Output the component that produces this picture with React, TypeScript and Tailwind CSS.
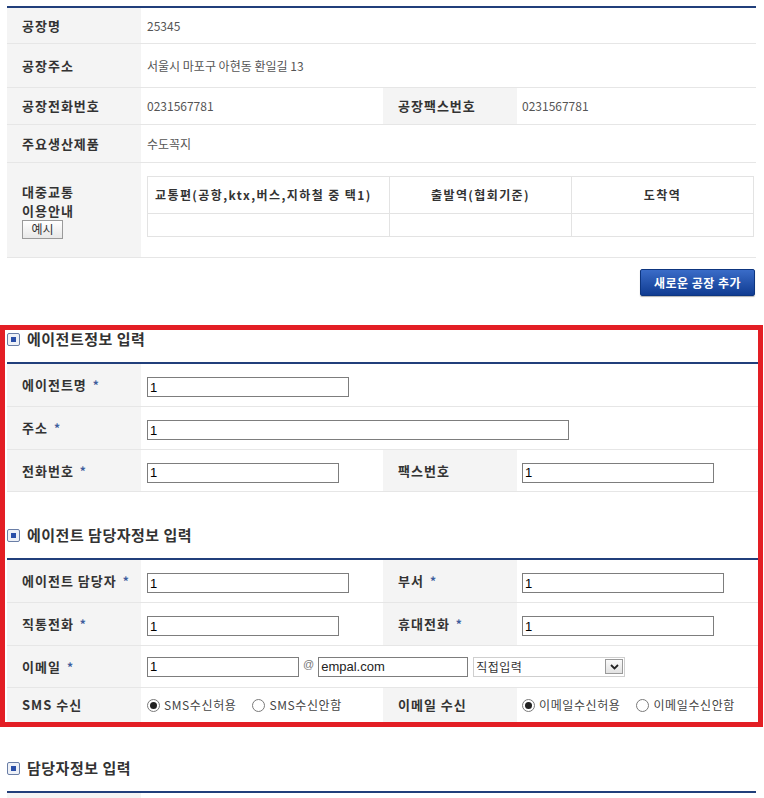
import React from "react";

const navy = "border-[#213f7b]";

function Label({ children, star, w = "w-[134px]" }: { children: React.ReactNode; star?: boolean; w?: string }) {
  return (
    <div className={`${w} shrink-0 self-stretch bg-[#f4f4f4] flex items-center pl-[15px] text-[13px] font-bold tracking-[1px] text-[#333]`}>
      {children}
      {star && <span className="ml-[6px] text-[12px] text-[#3d5c9c]">*</span>}
    </div>
  );
}

function Field({ w }: { w: string }) {
  return (
    <input
      readOnly
      defaultValue="1"
      className={`${w} h-[20px] border border-[#7d7d7d] bg-white px-[2px] text-[13px] text-black font-['Liberation_Sans',sans-serif] outline-none`}
    />
  );
}

function Radio({ on, label }: { on?: boolean; label: string }) {
  return (
    <span className="flex items-center gap-[4px]">
      <span className="w-[13px] h-[13px] rounded-full border border-[#7a7a7a] bg-white flex items-center justify-center">
        {on && <span className="w-[7px] h-[7px] rounded-full bg-[#222]" />}
      </span>
      <span className="text-[12px] tracking-[0.6px] text-[#444]">{label}</span>
    </span>
  );
}

function SectionTitle({ title }: { title: string }) {
  return (
    <div className={`h-[32px] flex items-start border-b-2 ${navy} box-content`}>
      <div className="flex items-center h-[18px]">
        <span className="w-[13px] h-[13px] rounded-[2px] border border-[#6a7ea6] bg-[#eef1f7] flex items-center justify-center">
          <span className="w-[5px] h-[5px] bg-[#2a4fa8]" />
        </span>
        <span className="ml-[7px] text-[15px] leading-[18px] font-bold tracking-[0.5px] text-[#333]">{title}</span>
      </div>
    </div>
  );
}

export default function App() {
  return (
    <div className="w-[764px] h-[798px] overflow-hidden bg-white font-['Noto_Sans_CJK_KR','Noto_Sans',sans-serif]">
      {/* 공장 정보 */}
      <div className="pt-[6px] pl-[7px] pr-[8px]">
        <div className={`border-t-2 ${navy}`}>
          <div className="h-[36px] flex border-b border-[#e6e6e6]">
            <Label>공장명</Label>
            <div className="flex items-center pl-[6px] text-[12px] text-[#555]">25345</div>
          </div>
          <div className="h-[44px] flex border-b border-[#e6e6e6]">
            <Label>공장주소</Label>
            <div className="flex items-center pl-[6px] text-[12px] text-[#555]">서울시 마포구 아현동 환일길 13</div>
          </div>
          <div className="h-[37px] flex border-b border-[#e6e6e6]">
            <Label>공장전화번호</Label>
            <div className="w-[242px] flex items-center pl-[6px] text-[12px] text-[#555]">0231567781</div>
            <Label>공장팩스번호</Label>
            <div className="flex items-center pl-[5px] text-[12px] text-[#555]">0231567781</div>
          </div>
          <div className="h-[38px] flex border-b border-[#e6e6e6]">
            <Label>주요생산제품</Label>
            <div className="flex items-center pl-[6px] text-[12px] text-[#555]">수도꼭지</div>
          </div>
          <div className="h-[95px] flex border-b border-[#e6e6e6]">
            <div className="w-[134px] shrink-0 bg-[#f4f4f4] flex flex-col justify-center items-start pl-[15px] text-[13px] font-bold tracking-[1px] text-[#333] leading-[19px]">
              <div>대중교통</div>
              <div>이용안내</div>
              <button className="w-[41px] h-[19px] border border-[#9a9a9a] bg-gradient-to-b from-white to-[#e8e8e8] text-[12px] font-normal tracking-normal text-[#333] leading-none">
                예시
              </button>
            </div>
            <div className="flex-1 pl-[6px] pr-[2px] pt-[13px]">
              <div className="border border-[#e3e3e3] text-[12px]">
                <div className="h-[37px] flex border-b border-[#e3e3e3] font-bold tracking-[1.4px] text-[#333]">
                  <div className="w-[242px] flex items-center pl-[7px] border-r border-[#e3e3e3]">교통편(공항,ktx,버스,지하철 중 택1)</div>
                  <div className="w-[182px] flex items-center justify-center border-r border-[#e3e3e3]">출발역(협회기준)</div>
                  <div className="flex-1 flex items-center justify-center">도착역</div>
                </div>
                <div className="h-[22px] flex">
                  <div className="w-[242px] border-r border-[#e3e3e3]" />
                  <div className="w-[182px] border-r border-[#e3e3e3]" />
                  <div className="flex-1" />
                </div>
              </div>
            </div>
          </div>
        </div>
        <div className="flex justify-end pt-[11px] pr-[1px]">
          <button className="w-[115px] h-[27px] rounded-[2px] border border-[#0d357f] bg-gradient-to-b from-[#3a6cc8] to-[#103c92] text-white text-[12px] font-bold tracking-[0.5px] shadow-[0_1px_1px_rgba(0,0,0,0.3)]">
            새로운 공장 추가
          </button>
        </div>
      </div>

      {/* 강조 영역 */}
      <div className="mt-[29px] w-[763px] border-[5px] border-[#e31e24] pl-[2px]">
        <SectionTitle title="에이전트정보 입력" />
        <div className="h-[43px] flex items-center border-b border-[#e6e6e6]">
          <Label star>에이전트명</Label>
          <div className="pl-[6px]"><Field w="w-[202px]" /></div>
        </div>
        <div className="h-[43px] flex items-center border-b border-[#e6e6e6]">
          <Label star>주소</Label>
          <div className="pl-[6px]"><Field w="w-[422px]" /></div>
        </div>
        <div className="h-[42px] flex items-center border-b border-[#e6e6e6]">
          <Label star>전화번호</Label>
          <div className="w-[242px] pl-[6px]"><Field w="w-[192px]" /></div>
          <Label>팩스번호</Label>
          <div className="pl-[5px]"><Field w="w-[192px]" /></div>
        </div>

        <div className="mt-[34px]">
          <SectionTitle title="에이전트 담당자정보 입력" />
        </div>
        <div className="h-[43px] flex items-center border-b border-[#e6e6e6]">
          <Label star>에이전트 담당자</Label>
          <div className="w-[242px] pl-[6px]"><Field w="w-[202px]" /></div>
          <Label star>부서</Label>
          <div className="pl-[5px]"><Field w="w-[202px]" /></div>
        </div>
        <div className="h-[43px] flex items-center border-b border-[#e6e6e6]">
          <Label star>직통전화</Label>
          <div className="w-[242px] pl-[6px]"><Field w="w-[192px]" /></div>
          <Label star>휴대전화</Label>
          <div className="pl-[5px]"><Field w="w-[192px]" /></div>
        </div>
        <div className="h-[42px] flex items-center border-b border-[#e6e6e6]">
          <Label star>이메일</Label>
          <div className="pl-[6px] flex items-center">
            <Field w="w-[152px]" />
            <span className="mx-[4px] text-[11px] text-[#777] font-['Liberation_Sans',sans-serif] -mt-[4px]">@</span>
            <input
              readOnly
              defaultValue="empal.com"
              className="w-[150px] h-[20px] border border-[#7d7d7d] bg-white px-[2px] text-[13px] text-[#222] font-['Liberation_Sans',sans-serif] outline-none"
            />
            <div className="ml-[5px] w-[152px] h-[20px] border border-[#cfcfcf] flex items-center justify-between pl-[2px] pr-[1px] bg-white">
              <span className="text-[12px] tracking-[0.5px] text-[#333]">직접입력</span>
              <span className="w-[18px] h-[15px] border border-[#9a9a9a] bg-gradient-to-b from-[#fafafa] to-[#e2e2e2] flex items-center justify-center">
                <svg width="9" height="6" viewBox="0 0 9 6">
                  <path d="M1 1 L4.5 4.5 L8 1" fill="none" stroke="#222" strokeWidth="1.8" />
                </svg>
              </span>
            </div>
          </div>
        </div>
        <div className="h-[34px] flex items-center">
          <Label>SMS 수신</Label>
          <div className="w-[242px] pl-[6px] flex items-center gap-[16px]">
            <Radio on label="SMS수신허용" />
            <Radio label="SMS수신안함" />
          </div>
          <Label>이메일 수신</Label>
          <div className="pl-[5px] flex items-center gap-[16px]">
            <Radio on label="이메일수신허용" />
            <Radio label="이메일수신안함" />
          </div>
        </div>
      </div>

      {/* 담당자정보 */}
      <div className="mt-[32px] pl-[7px] pr-[8px]">
        <SectionTitle title="담당자정보 입력" />
        <div className="h-[43px] flex border-b border-[#e6e6e6]">
          <Label>{""}</Label>
        </div>
      </div>
    </div>
  );
}
